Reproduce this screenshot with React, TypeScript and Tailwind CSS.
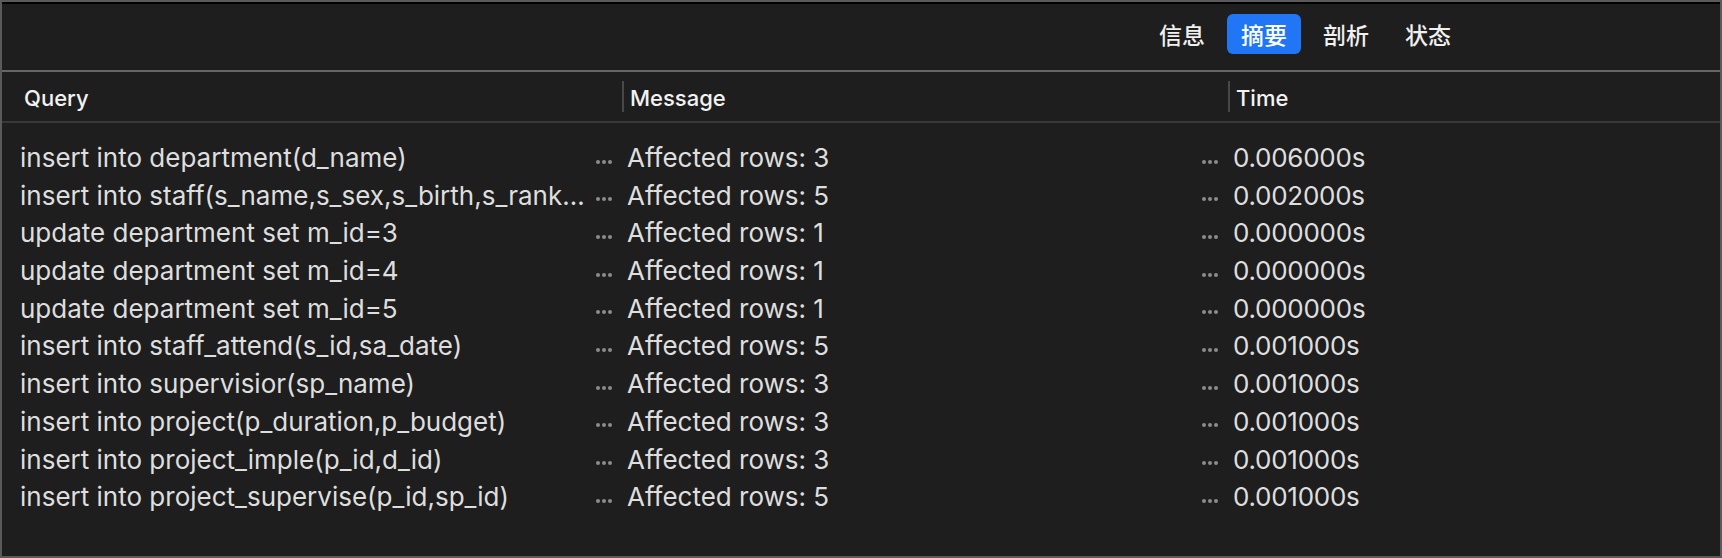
const tabs = ["信息", "摘要", "剖析", "状态"];

const rows = [
  ["insert into department(d_name)", "Affected rows: 3", "0.006000s"],
  ["insert into staff(s_name,s_sex,s_birth,s_rank,d_id) values", "Affected rows: 5", "0.002000s"],
  ["update department set m_id=3", "Affected rows: 1", "0.000000s"],
  ["update department set m_id=4", "Affected rows: 1", "0.000000s"],
  ["update department set m_id=5", "Affected rows: 1", "0.000000s"],
  ["insert into staff_attend(s_id,sa_date)", "Affected rows: 5", "0.001000s"],
  ["insert into supervisior(sp_name)", "Affected rows: 3", "0.001000s"],
  ["insert into project(p_duration,p_budget)", "Affected rows: 3", "0.001000s"],
  ["insert into project_imple(p_id,d_id)", "Affected rows: 3", "0.001000s"],
  ["insert into project_supervise(p_id,sp_id)", "Affected rows: 5", "0.001000s"],
];

function Dots() {
  return (
    <div className="flex shrink-0 gap-[2px] mt-[8px]">
      <span className="w-1 h-1 rounded-full bg-[#8c8c8c]" />
      <span className="w-1 h-1 rounded-full bg-[#8c8c8c]" />
      <span className="w-1 h-1 rounded-full bg-[#8c8c8c]" />
    </div>
  );
}

export default function App() {
  return (
    <div className="w-[1722px] h-[558px] flex flex-col bg-[#1e1e1e] border-2 border-[#5a5a5a] font-['Inter','Liberation_Sans',sans-serif] overflow-hidden">
      <div className="h-[2px] bg-black shrink-0" />

      {/* Toolbar */}
      <div className="h-[66px] shrink-0 flex justify-end items-start pt-[10px] pr-[255px] gap-2 font-['Noto_Sans_CJK_SC',sans-serif]">
        {tabs.map((t) => (
          <div
            key={t}
            className={
              t === "摘要"
                ? "w-[74px] h-10 flex items-center justify-center rounded-md bg-[#2176f5] text-white text-[23px] font-medium"
                : "w-[74px] h-10 flex items-center justify-center text-[#f0f0f0] text-[23px] font-medium"
            }
          >
            {t}
          </div>
        ))}
      </div>
      <div className="h-[2px] bg-[#666666] shrink-0" />

      {/* Header */}
      <div className="grid grid-cols-[620px_606px_1fr] h-[51px] shrink-0 items-center border-b-2 border-[#383838] text-[22px] font-medium text-[#f2f2f2]">
        <div className="pl-[22px] pt-1">Query</div>
        <div className="flex items-center">
          <span className="w-[2px] h-[31px] bg-[#484848]" />
          <span className="pl-[6px] pt-1">Message</span>
        </div>
        <div className="flex items-center">
          <span className="w-[2px] h-[31px] bg-[#484848]" />
          <span className="pl-[6px] pt-1">Time</span>
        </div>
      </div>

      {/* Rows */}
      <div className="pt-[13px] text-[26px] text-[#dedede]">
        {rows.map(([q, m, t], i) => (
          <div key={i} className="grid grid-cols-[620px_606px_1fr] h-[37.7px] pt-[2px] items-center">
            <div className="flex items-center pl-[18px] pr-[10px] gap-2">
              <span className="flex-1 min-w-0 truncate">{q}</span>
              <Dots />
            </div>
            <div className="flex items-center pl-[5px] pr-[10px] gap-2">
              <span className="flex-1 min-w-0 truncate">{m}</span>
              <Dots />
            </div>
            <div className="pl-[5px] tracking-[-0.01em]">{t}</div>
          </div>
        ))}
      </div>
    </div>
  );
}
